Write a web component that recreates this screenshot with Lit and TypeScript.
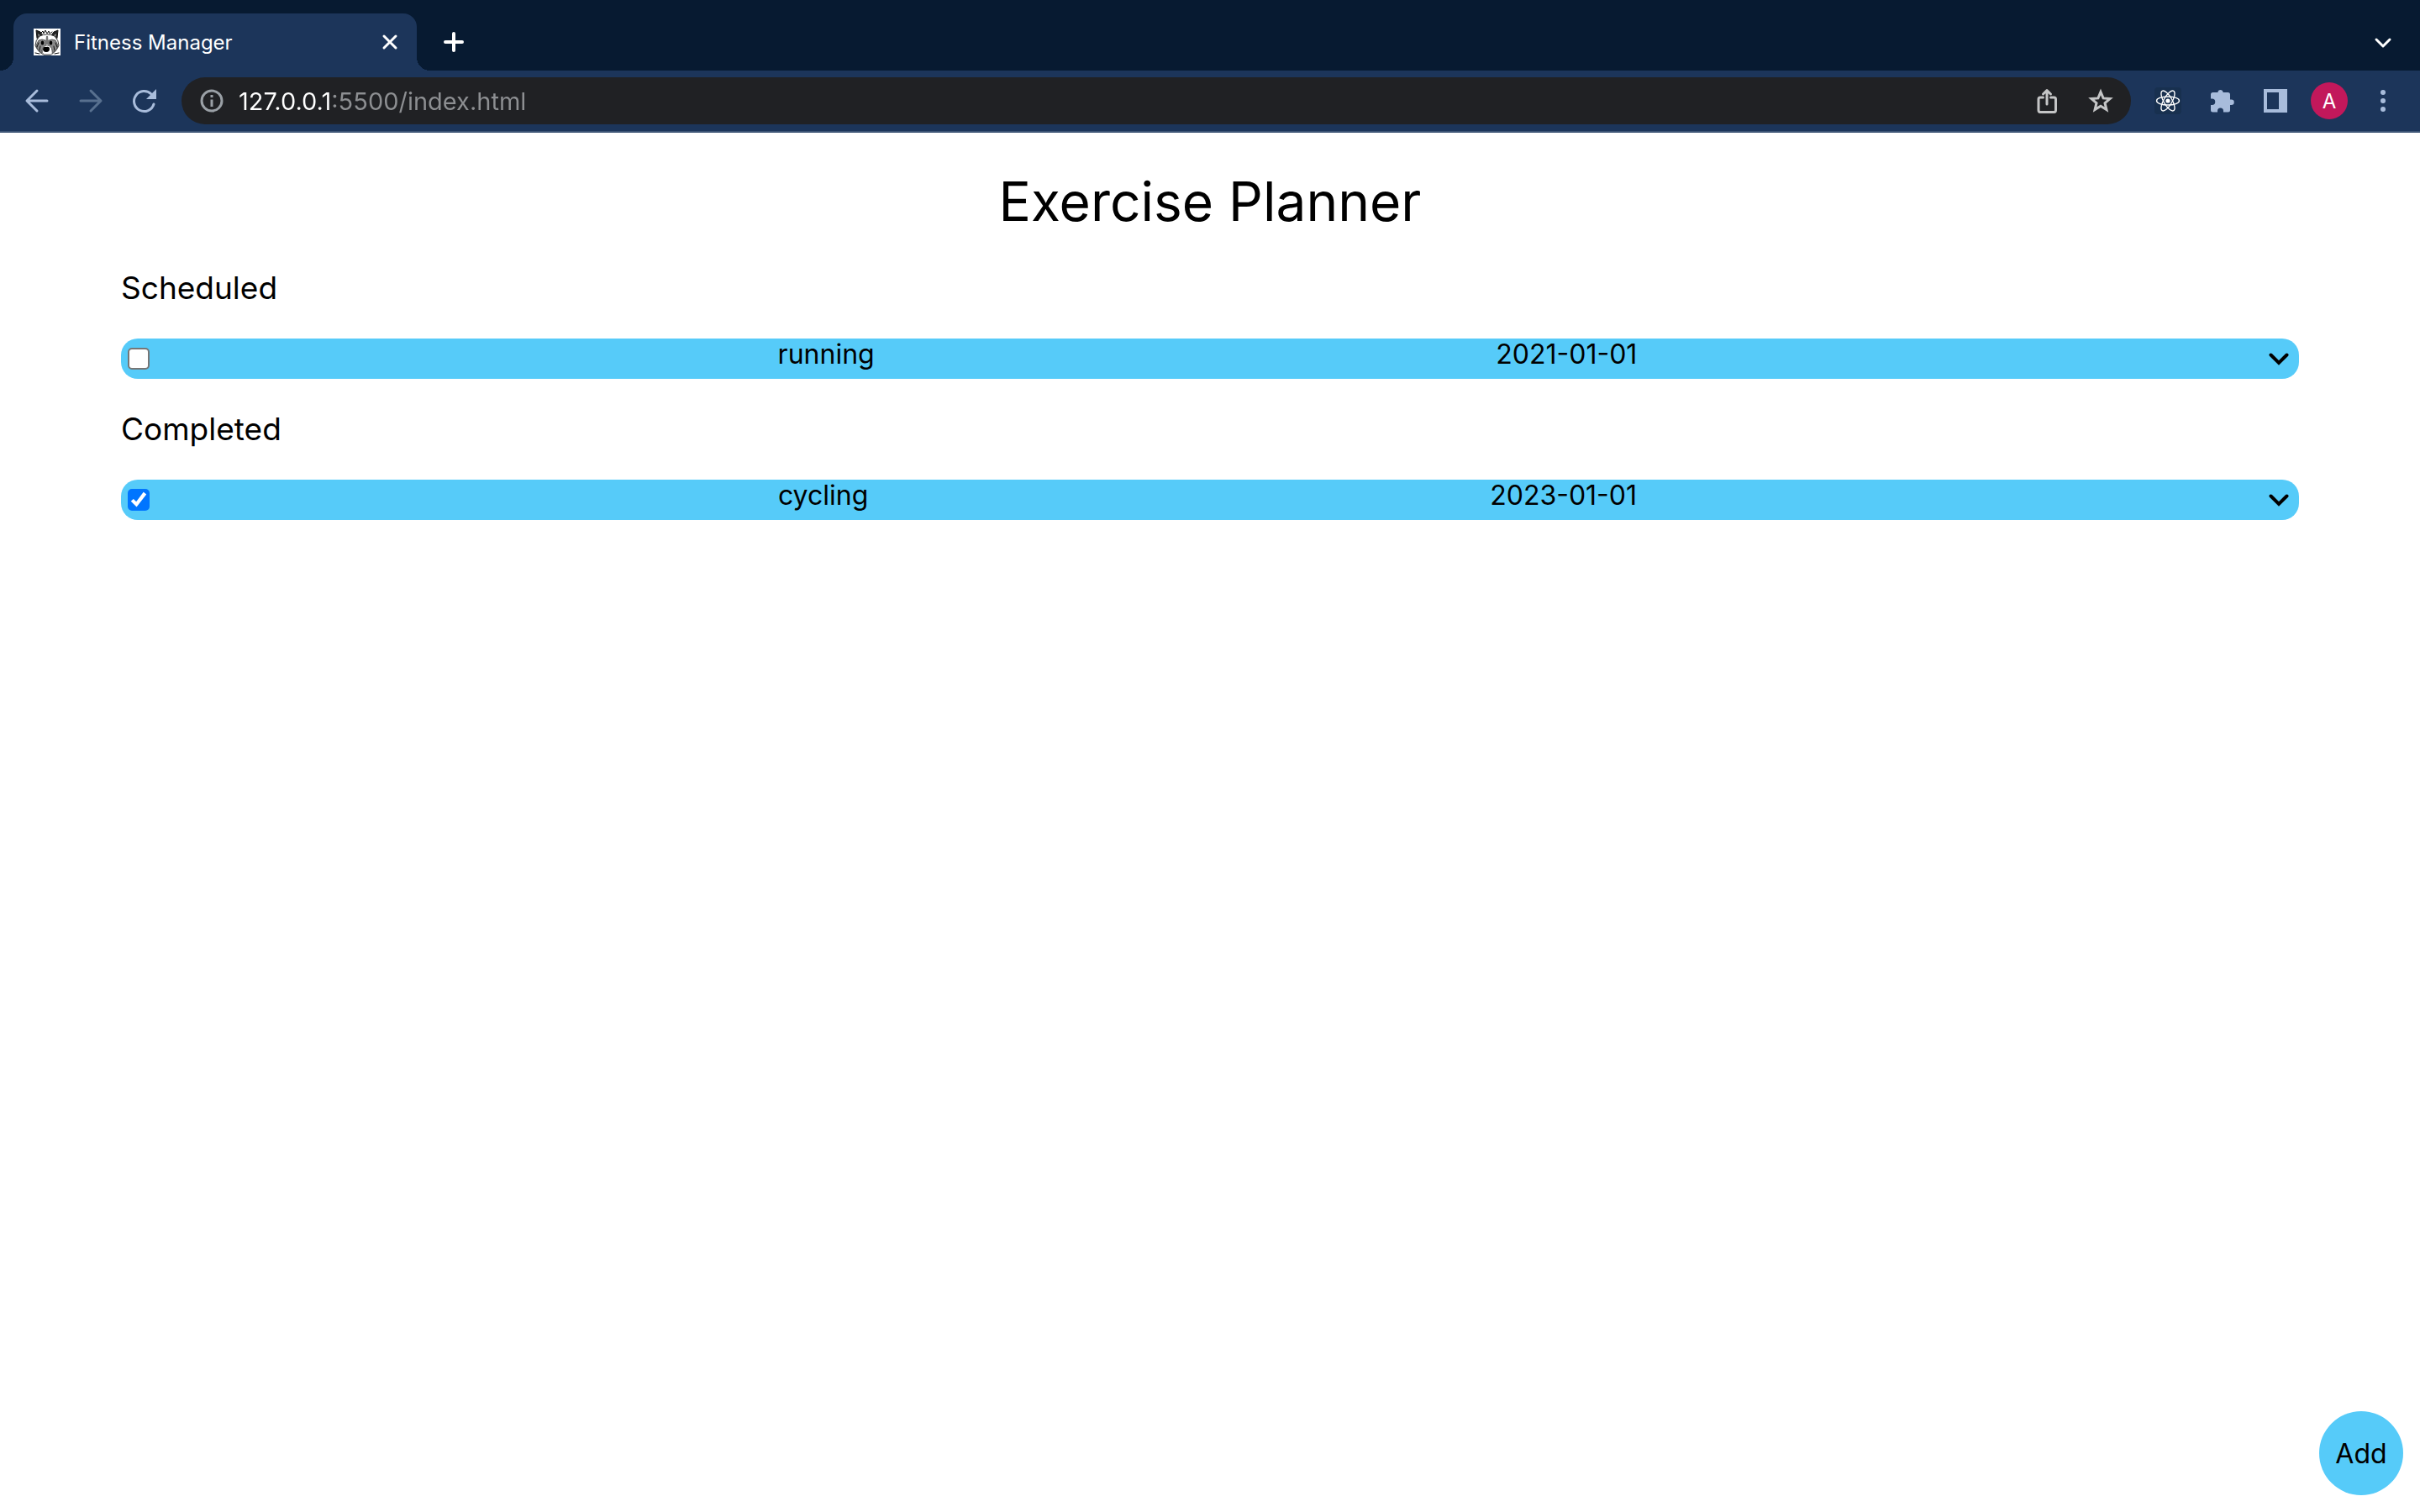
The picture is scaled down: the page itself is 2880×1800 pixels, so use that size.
import { LitElement, html, css, svg } from "lit";
import { customElement, property, state } from "lit/decorators.js";

interface Exercise {
  id: number;
  name: string;
  date: string;
  done: boolean;
}

@customElement("browser-bar")
class BrowserBar extends LitElement {
  @property() heading = "";
  @property() address = "";

  static styles = css`
    :host {
      display: block;
      color: #fff;
      font-family: Inter, "Liberation Sans", sans-serif;
    }
    button {
      display: flex;
      align-items: center;
      justify-content: center;
      width: 64px;
      height: 56px;
      padding: 0;
      border: 0;
      background: none;
      color: inherit;
      font: inherit;
    }
    svg {
      display: block;
      width: 32px;
      height: 32px;
      fill: none;
      stroke: currentColor;
      stroke-width: 3;
      stroke-linecap: round;
      stroke-linejoin: round;
    }
    .strip {
      display: flex;
      height: 84px;
      box-sizing: border-box;
      padding: 16px 12px 0 16px;
      justify-content: space-between;
      background: #071a31;
    }
    .tabs {
      display: flex;
    }
    .tab {
      display: flex;
      align-items: center;
      width: 480px;
      height: 68px;
      box-sizing: border-box;
      padding-left: 24px;
      gap: 16px;
      border-radius: 16px 16px 0 0;
      background: #1c355a;
      font-size: 24px;
      position: relative;
    }
    .tab::before,
    .tab::after {
      content: "";
      position: absolute;
      bottom: 0;
      width: 16px;
      height: 16px;
    }
    .tab::before {
      right: 100%;
      background: radial-gradient(circle at 0 0, transparent 16px, #1c355a 16px);
    }
    .tab::after {
      left: 100%;
      background: radial-gradient(circle at 100% 0, transparent 16px, #1c355a 16px);
    }
    .label {
      flex: 1;
    }
    .strip button {
      height: 68px;
    }
    .new {
      margin-left: 12px;
    }
    .favicon {
      stroke-width: 1;
    }
    .toolbar {
      display: flex;
      align-items: center;
      height: 72px;
      padding: 0 12px;
      background: #1c355a;
      border-bottom: 2px solid #3d5475;
      color: #a8bcdb;
    }
    .forward {
      color: #58708f;
    }
    .omnibox {
      display: flex;
      flex: 1;
      align-items: center;
      height: 56px;
      margin: 0 12px;
      padding: 0 4px 0 8px;
      box-sizing: border-box;
      border-radius: 28px;
      background: #202124;
      color: #c4c5c6;
    }
    .info {
      width: 56px;
      margin-right: 4px;
      color: #9aa0a6;
    }
    input {
      flex: 1;
      min-width: 0;
      height: 56px;
      padding: 0;
      border: 0;
      outline: 0;
      background: linear-gradient(90deg, #fff 112px, #8d8f92 112px);
      background-clip: text;
      -webkit-background-clip: text;
      color: transparent;
      font: inherit;
      font-size: 29px;
    }
    .solid {
      fill: currentColor;
      stroke: none;
    }
    .react {
      color: #fff;
    }
    .react svg {
      border-radius: 4px;
      background: #18304f;
      stroke-width: 1.4;
    }
    .avatar {
      display: flex;
      align-items: center;
      justify-content: center;
      width: 44px;
      height: 44px;
      border-radius: 50%;
      background: #c2185b;
      color: #fff;
      font-size: 24px;
    }
  `;

  private icon(body: unknown, cls = "") {
    return html`<svg class=${cls} viewBox="0 0 32 32" aria-hidden="true">${body}</svg>`;
  }

  private raccoon = svg`
    <path fill="#fff" stroke="none" d="M0 0h32v32H0z"/>
    <path fill="#222" stroke="#111" d="M4 11 3 2l5 2 3 4-5 6zM28 11l1-9-5 2-3 4 5 6z"/>
    <path fill="#888" stroke="none" d="M5 6l3 2-2 3zM27 6l-3 2 2 3z"/>
    <path fill="#fff" stroke="#333" d="M7 9Q16 5 25 9q5 5 5 11-3 8-10 11h-8Q5 28 2 20q0-6 5-11z"/>
    <path fill="#8a8a8a" stroke="#555" d="M14 14Q10 12 6 14l-3 6q1 5 5 8l2 1q-1-5 4-9zM18 14q4-2 8 0l3 6q-1 5-5 8l-2 1q1-5-4-9z"/>
    <path fill="#777" stroke="none" d="M15 9h2l1 10h-4z"/>
    <path fill="#fff" stroke="#666" d="M10 26q1-6 6-6t6 6-2 5h-8q-2-2-2-5z"/>
    <path fill="#000" stroke="none" d="M11 24q1-3 4-2 4-1 4 2 0 4-4 4-4 0-4-4z"/>
    <ellipse cx="10.500" cy="17" rx="1.800" ry="2.500" fill="#000" stroke="none"/>
    <ellipse cx="20.500" cy="17" rx="1.800" ry="2.500" fill="#000" stroke="none"/>
    <path stroke="#111" d="M9 5l2-2 1 3 2-4 2 4 2-3 1 3 3-2M2 29l5 1M30 29l-5 1M6 17l-2 5M26 17l2 5M8 21l-1 5M24 21l1 5"/>`;

  render() {
    return html`
      <div class="strip">
        <div class="tabs">
          <div class="tab">
            ${this.icon(this.raccoon, "favicon")}
            <span class="label">${this.heading}</span>
            <button aria-label="Close tab">
              ${this.icon(svg`<path d="M9 9 23 23M23 9 9 23"/>`)}
            </button>
          </div>
          <button class="new" aria-label="New tab">
            ${this.icon(svg`<path stroke-width="4" d="M16 6V26M6 16H26"/>`)}
          </button>
        </div>
        <button aria-label="Search tabs">
          ${this.icon(svg`<path d="M8 13 16 21 24 13"/>`)}
        </button>
      </div>
      <div class="toolbar">
        <button aria-label="Back">
          ${this.icon(svg`<path d="M28 16H5M16 4 4 16 16 28"/>`)}
        </button>
        <button class="forward" aria-label="Forward">
          ${this.icon(svg`<path d="M4 16H27M16 4 28 16 16 28"/>`)}
        </button>
        <button aria-label="Reload">
          ${this.icon(svg`<path d="M27 20A12 12 0 1 1 24 8"/><path fill="currentColor" stroke="none" d="M30 2V14H18z"/>`)}
        </button>
        <div class="omnibox">
          <button class="info" aria-label="Site information">
            ${this.icon(svg`<circle cx="16" cy="16" r="12"/><path stroke-linecap="butt" d="M16 14.500V23M16 9V12"/>`)}
          </button>
          <input type="text" aria-label="Address" .value=${this.address} />
          <button aria-label="Share">
            ${this.icon(svg`<path d="M11.500 12H8Q6 12 6 14V27Q6 29.500 8 29.500H24.500Q26.500 29.500 26.500 27V14Q26.500 12 24.500 12H20.500M16 20V4M11.500 8 16 3.500 20.500 8"/>`)}
          </button>
          <button aria-label="Bookmark">
            ${this.icon(svg`<path stroke-linejoin="miter" d="M16 5.500 19.100 12.900 27.100 13.500 21 18.700 22.900 26.500 16 22.300 9.100 26.500 11 18.700 4.900 13.500 12.900 12.900z"/>`)}
          </button>
        </div>
        <button class="react" aria-label="React extension">
          ${this.icon(svg`<ellipse cx="16" cy="16" rx="13.500" ry="5"/><ellipse cx="16" cy="16" rx="13.500" ry="5" transform="rotate(60 16 16)"/><ellipse cx="16" cy="16" rx="13.500" ry="5" transform="rotate(120 16 16)"/><circle cx="16" cy="16" r="2.600" fill="currentColor" stroke="none"/>`)}
        </button>
        <button aria-label="Extensions">
          ${this.icon(svg`<path d="M24.500 14.500H23V8.500A2.500 2.500 0 0 0 20.500 6H14.500V5A3.200 3.200 0 0 0 8.500 5V6H2.500A2.500 2.500 0 0 0 0 8.500V13.500H1.500A3.500 3.500 0 0 1 1.500 21H0V27A2.500 2.500 0 0 0 2.500 29.500H8V28A3.500 3.500 0 0 1 15 28V29.500H20.500A2.500 2.500 0 0 0 23 27V21H24.500A3.200 3.200 0 0 0 24.500 14.500z" transform="translate(3 0)"/>`, "solid")}
        </button>
        <button aria-label="Side panel">
          ${this.icon(svg`<path fill-rule="evenodd" d="M2 2H30V30H2zM6 6V26H20V6z"/>`, "solid")}
        </button>
        <button aria-label="Profile"><span class="avatar">A</span></button>
        <button aria-label="Menu">
          ${this.icon(svg`<circle cx="16" cy="6" r="3"/><circle cx="16" cy="16" r="3"/><circle cx="16" cy="26" r="3"/>`, "solid")}
        </button>
      </div>
    `;
  }
}

@customElement("exercise-list")
class ExerciseList extends LitElement {
  @property() heading = "";
  @property({ attribute: false }) items: Exercise[] = [];

  static styles = css`
    :host {
      display: block;
    }
    h2 {
      margin: 0 0 36px;
      font-size: 37px;
      font-weight: 400;
      line-height: 48px;
    }
    ul {
      margin: 0;
      padding: 0;
      list-style: none;
    }
    li {
      display: flex;
      justify-content: space-between;
      height: 48px;
      border-radius: 20px;
      background: #56cbf9;
      line-height: 38px;
    }
    input {
      appearance: none;
      box-sizing: border-box;
      align-self: center;
      width: 26px;
      height: 26px;
      margin: 0 8px;
      border: 2px solid #767676;
      border-radius: 5px;
      background: #fff;
    }
    input:checked {
      border-color: #0075ff;
      background: #0075ff;
    }
    input:checked::before {
      content: "";
      display: block;
      width: 22px;
      height: 22px;
      background: #fff;
      clip-path: polygon(8% 58%, 22% 45%, 37% 60%, 76% 8%, 92% 21%, 39% 89%);
    }
    button {
      display: flex;
      align-items: center;
      justify-content: center;
      width: 48px;
      height: 48px;
      padding: 0;
      border: 0;
      background: none;
      color: #000;
    }
    svg {
      width: 24px;
      height: 24px;
      fill: none;
      stroke: currentColor;
      stroke-width: 4;
      stroke-linecap: round;
    }
  `;

  private toggle(id: number) {
    this.dispatchEvent(new CustomEvent("toggle-item", { detail: id }));
  }

  render() {
    return html`
      <h2>${this.heading}</h2>
      <ul>
        ${this.items.map(
          (item) => html`
            <li>
              <input
                id="done-${item.id}"
                type="checkbox"
                .checked=${item.done}
                @change=${() => this.toggle(item.id)}
              />
              <label for="done-${item.id}">${item.name}</label>
              <time datetime=${item.date}>${item.date}</time>
              <button aria-label="Show details">
                <svg viewBox="0 0 24 24" aria-hidden="true"><path d="M2.500 7.500 12 17 21.500 7.500" /></svg>
              </button>
            </li>
          `,
        )}
      </ul>
    `;
  }
}

@customElement("app-root")
class AppRoot extends LitElement {
  @state() private exercises: Exercise[] = [
    { id: 1, name: "running", date: "2021-01-01", done: false },
    { id: 2, name: "cycling", date: "2023-01-01", done: true },
  ];

  static styles = css`
    :host {
      display: block;
      min-height: 100vh;
      background: #fff;
      color: #000;
      font-family: Inter, "Liberation Sans", sans-serif;
      font-size: 32px;
    }
    main {
      padding: 42px 5%;
    }
    h1 {
      margin: 0;
      font-size: 64px;
      font-weight: 400;
      line-height: 80px;
      text-align: center;
    }
    .lists {
      display: flex;
      flex-direction: column;
      gap: 36px;
      margin-top: 39px;
    }
    .add {
      position: fixed;
      right: 20px;
      bottom: 20px;
      width: 100px;
      height: 100px;
      padding: 0;
      border: 0;
      border-radius: 50%;
      background: #56cbf9;
      color: inherit;
      font: inherit;
    }
  `;

  private toggle = (event: CustomEvent<number>) => {
    this.exercises = this.exercises.map((item) =>
      item.id === event.detail ? { ...item, done: !item.done } : item,
    );
  };

  render() {
    return html`
      <browser-bar heading="Fitness Manager" address="127.0.0.1:5500/index.html"></browser-bar>
      <main>
        <h1>Exercise Planner</h1>
        <div class="lists">
          <exercise-list
            heading="Scheduled"
            .items=${this.exercises.filter((item) => !item.done)}
            @toggle-item=${this.toggle}
          ></exercise-list>
          <exercise-list
            heading="Completed"
            .items=${this.exercises.filter((item) => item.done)}
            @toggle-item=${this.toggle}
          ></exercise-list>
        </div>
      </main>
      <button class="add">Add</button>
    `;
  }
}
